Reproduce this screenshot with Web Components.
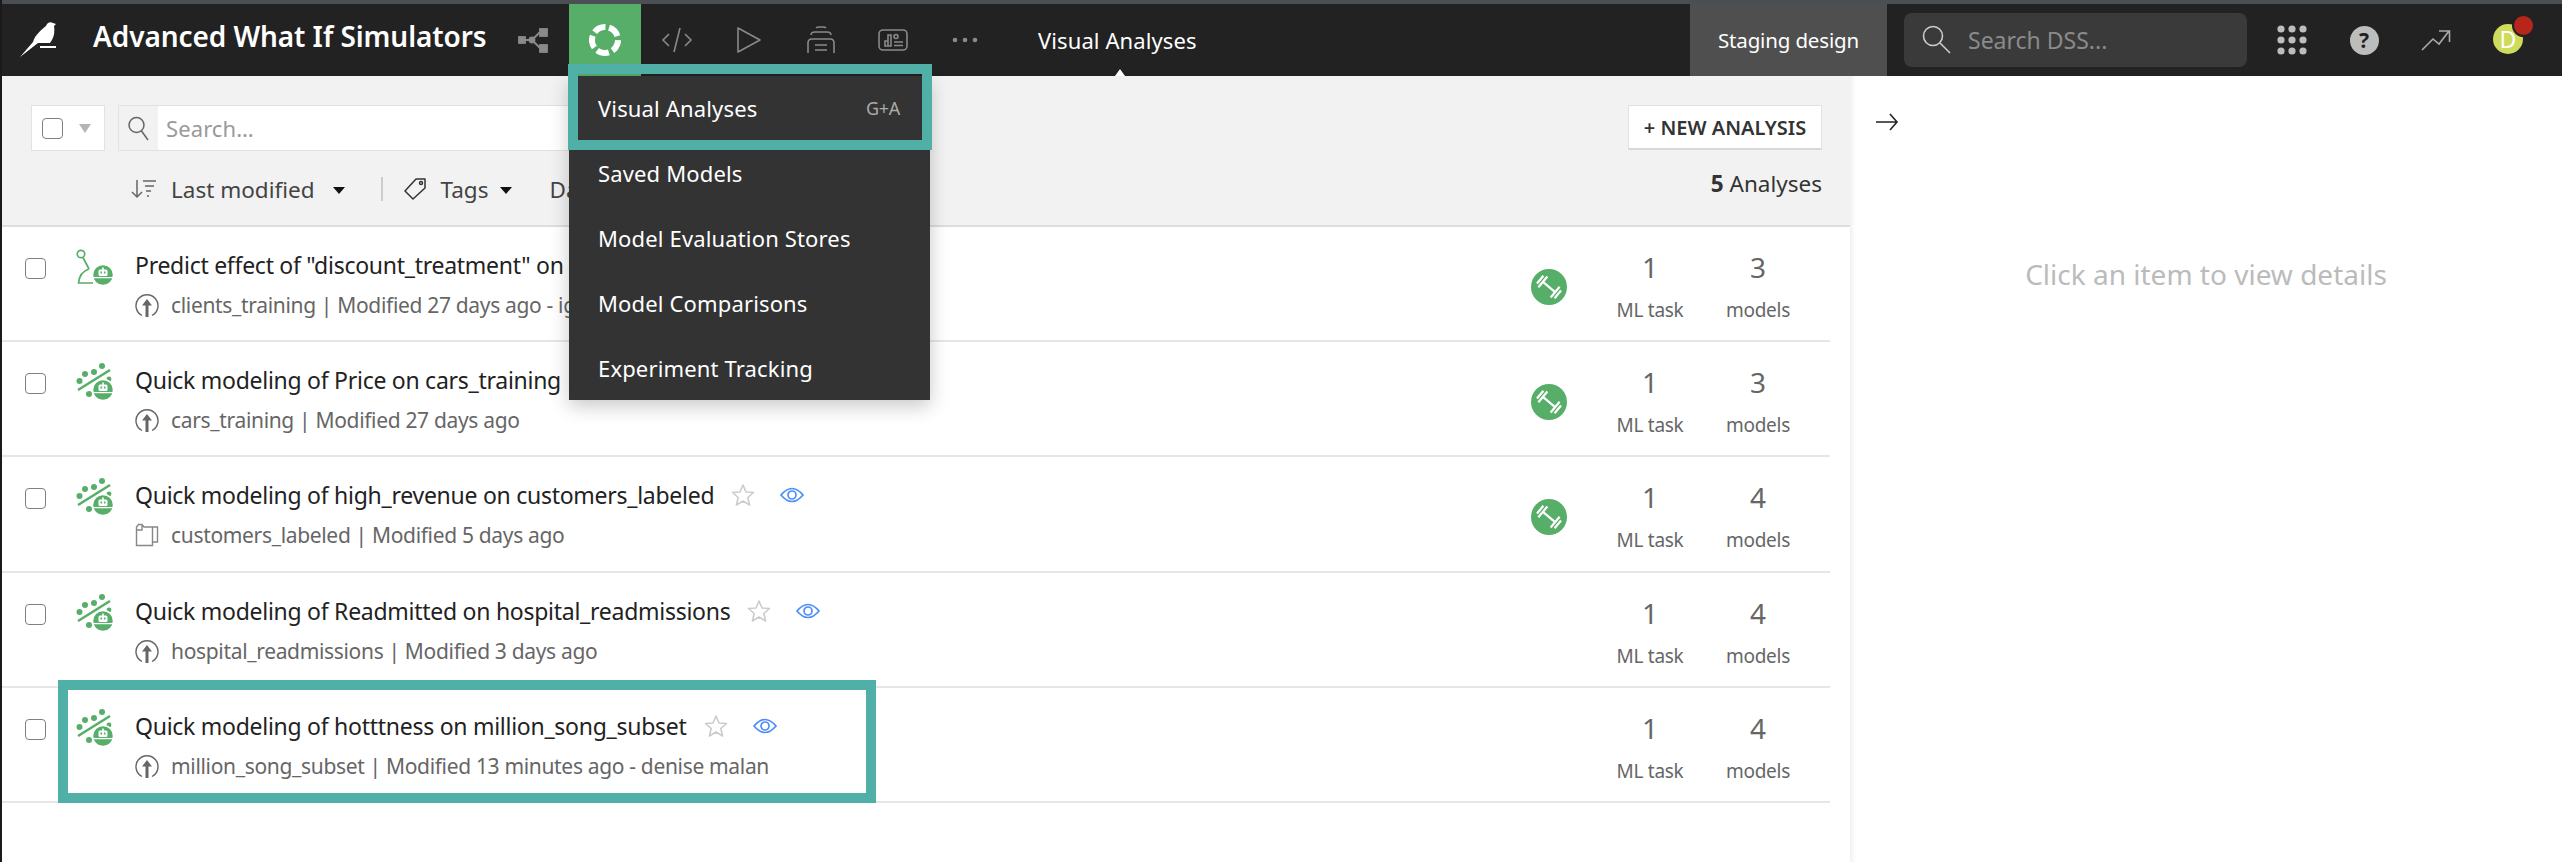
<!DOCTYPE html>
<html lang="en">
<head>
<meta charset="utf-8">
<title>Visual Analyses</title>
<style>
  html, body { margin: 0; padding: 0; background: #fff; }
  body { font-family: "Noto Sans", "Liberation Sans", sans-serif; }
</style>
</head>
<body>
<app-shell>
  <top-nav slot="nav" project="Advanced What If Simulators" section="Visual Analyses"></top-nav>
  <analyses-pane slot="pane">
    <analysis-row kind="uplift" source="upload" trained tasks="1" models="3" nowatch>
      <span slot="title">Predict effect of "discount_treatment" on</span>
      <span slot="meta">clients_training | Modified 27 days ago - ig</span>
    </analysis-row>
    <analysis-row kind="quick" source="upload" trained tasks="1" models="3" nowatch>
      <span slot="title">Quick modeling of Price on cars_training</span>
      <span slot="meta">cars_training | Modified 27 days ago</span>
    </analysis-row>
    <analysis-row kind="quick" source="folder" trained tasks="1" models="4">
      <span slot="title">Quick modeling of high_revenue on customers_labeled</span>
      <span slot="meta">customers_labeled | Modified 5 days ago</span>
    </analysis-row>
    <analysis-row kind="quick" source="upload" tasks="1" models="4">
      <span slot="title">Quick modeling of Readmitted on hospital_readmissions</span>
      <span slot="meta">hospital_readmissions | Modified 3 days ago</span>
    </analysis-row>
    <analysis-row kind="quick" source="upload" tasks="1" models="4">
      <span slot="title">Quick modeling of hotttness on million_song_subset</span>
      <span slot="meta">million_song_subset | Modified 13 minutes ago - denise malan</span>
    </analysis-row>
  </analyses-pane>
  <detail-panel slot="panel"></detail-panel>
  <nav-menu slot="overlay">
    <menu-item shortcut="G+A">Visual Analyses</menu-item>
    <menu-item>Saved Models</menu-item>
    <menu-item>Model Evaluation Stores</menu-item>
    <menu-item>Model Comparisons</menu-item>
    <menu-item>Experiment Tracking</menu-item>
  </nav-menu>
  <callout-box slot="overlay" style="left:568px;top:64px;width:364px;height:86px"></callout-box>
  <callout-box slot="overlay" style="left:58px;top:680px;width:818px;height:123px"></callout-box>
</app-shell>

<script>
// Small helper so every element below stamps its own template in an open shadow root
function stamp(el, html) {
  const tpl = document.createElement('template');
  tpl.innerHTML = html;
  el.attachShadow({ mode: 'open' }).appendChild(tpl.content.cloneNode(true));
}

class AppShell extends HTMLElement {
  constructor() {
    super();
    stamp(this, `
      <style>
        :host { display: block; position: relative; width: 2562px; height: 862px; overflow: hidden;
                box-sizing: border-box; border-left: 2px solid #1a1a1a; background: #fff; color: #222; }
        .strip { height: 4px; background: #4b4e53; }
        .main { display: flex; height: 786px; }
      </style>
      <div class="strip"></div>
      <slot name="nav"></slot>
      <div class="main">
        <slot name="pane"></slot>
        <slot name="panel"></slot>
      </div>
      <slot name="overlay"></slot>
    `);
  }
}

class TopNav extends HTMLElement {
  constructor() {
    super();
    stamp(this, `
      <style>
        :host { display: flex; align-items: stretch; height: 72px; background: #222; color: #fff; position: relative; }
        svg { display: block; }
        .logo { width: 40px; margin-left: 16px; display: flex; align-items: center; }
        .project { width: 404px; flex: none; margin-left: 35px; font-size: 28px; font-weight: 600; letter-spacing: -.08px;
                   line-height: 72px; margin-top: -4px; white-space: nowrap; }
        .tab { width: 72px; flex: none; display: flex; align-items: center; justify-content: center; }
        .tab.on { background: #57ae68; }
        .section { margin-left: 37px; line-height: 72px; font-size: 22px; letter-spacing: .1px; position: relative; white-space: nowrap; }
        .section::after { content: ""; position: absolute; left: 77px; bottom: 0; border: 5px solid transparent;
                          border-top: 0; border-bottom: 7px solid #fff; }
        .grow { flex: 1; }
        .env { width: 197px; flex: none; background: #4f4f4f; font-size: 20.5px; letter-spacing: -.15px; text-align: center; line-height: 72px; }
        .search { width: 343px; flex: none; box-sizing: border-box; margin: 9px 9px 9px 17px; background: #3a3a3a; border-radius: 8px;
                  display: flex; align-items: center; gap: 16px; padding-left: 18px; color: #8a8a8a; font-size: 23px; }
        .help { width: 29px; height: 29px; border-radius: 50%; background: #bdbdbd; color: #222; font-weight: 700; font-size: 21px;
                text-align: center; line-height: 29px; }
        .avatar { width: 30px; height: 30px; border-radius: 50%; background: #cfdb5b; color: #fff; font-size: 23px; line-height: 30px;
                  text-align: center; position: relative; margin-top: -2px; }
        .badge { position: absolute; left: 19px; top: -10px; width: 19px; height: 19px; border-radius: 50%; background: #b7261a;
                 border: 2px solid #222; }
      </style>
      <div class="logo">
        <svg width="40" height="40" viewBox="0 0 40 40" fill="#fff">
          <path d="M2 37 L15 22 C17 15 23 10 28 6 C29 3 32 1 35 3 L38 4 L36 6 C37 12 36 18 32 23 L20 23 Z"/>
          <rect x="22" y="26" width="16" height="2"/>
        </svg>
      </div>
      <div class="project"></div>
      <div class="tab">
        <svg width="32" height="32" viewBox="0 0 32 32" fill="#8a8a8a" stroke="#8a8a8a" stroke-width="1.8">
          <rect x="2" y="13" width="6" height="6"/><rect x="23" y="5" width="7" height="7"/><rect x="23" y="21" width="7" height="7"/>
          <circle cx="15" cy="16" r="2.5"/><path d="M8 16H15L23 8M15 16L23 24" fill="none"/>
        </svg>
      </div>
      <div class="tab on">
        <svg width="36" height="36" viewBox="0 0 36 36" fill="none" stroke="#fff" stroke-width="6">
          <circle cx="18" cy="18" r="13" stroke-dasharray="12.3 4" transform="rotate(-72 18 18)"/>
        </svg>
      </div>
      <div class="tab">
        <svg width="32" height="32" viewBox="0 0 32 32" fill="none" stroke="#8a8a8a" stroke-width="1.6">
          <path d="M8 10L2 16L8 22M24 10L30 16L24 22M19 4L13 28"/>
        </svg>
      </div>
      <div class="tab">
        <svg width="32" height="32" viewBox="0 0 32 32" fill="none" stroke="#8a8a8a" stroke-width="1.6" stroke-linejoin="round">
          <path d="M5 4V28L27 16Z"/>
        </svg>
      </div>
      <div class="tab">
        <svg width="32" height="32" viewBox="0 0 32 32" fill="none" stroke="#8a8a8a" stroke-width="1.6">
          <path d="M3 29V19Q3 15 7 15H25Q29 15 29 19V29M10 21H22M10 26H22M6 11Q6 8 10 8H22Q26 8 26 11M11 4Q12 3 14 3H18Q20 3 21 4"/>
        </svg>
      </div>
      <div class="tab">
        <svg width="32" height="32" viewBox="0 0 32 32" fill="none" stroke="#8a8a8a" stroke-width="1.6">
          <rect x="2" y="6" width="28" height="20" rx="4"/>
          <path d="M8 22V17H11V22ZM11 22V11H14V22H8M17 12.5a2 2 0 1 0 4 0a2 2 0 1 0 -4 0M17 18H26M17 21.5H26"/>
        </svg>
      </div>
      <div class="tab">
        <svg width="32" height="32" viewBox="0 0 32 32" fill="#8a8a8a"><circle cx="6" cy="16" r="2.3"/><circle cx="16" cy="16" r="2.3"/><circle cx="26" cy="16" r="2.3"/></svg>
      </div>
      <div class="section"></div>
      <div class="grow"></div>
      <div class="env">Staging design</div>
      <div class="search">
        <svg width="30" height="30" viewBox="0 0 30 30" fill="none" stroke="#ccc" stroke-width="1.6"><circle cx="11" cy="11" r="9.5"/><path d="M18 18L28 28"/></svg>
        <span>Search DSS...</span>
      </div>
      <div class="tab">
        <svg width="32" height="32" viewBox="0 0 32 32" fill="#bdbdbd">
          <circle cx="5" cy="5" r="3.6"/><circle cx="16" cy="5" r="3.6"/><circle cx="27" cy="5" r="3.6"/>
          <circle cx="5" cy="16" r="3.6"/><circle cx="16" cy="16" r="3.6"/><circle cx="27" cy="16" r="3.6"/>
          <circle cx="5" cy="27" r="3.6"/><circle cx="16" cy="27" r="3.6"/><circle cx="27" cy="27" r="3.6"/>
        </svg>
      </div>
      <div class="tab"><div class="help">?</div></div>
      <div class="tab">
        <svg width="32" height="32" viewBox="0 0 32 32" fill="none" stroke="#aaa" stroke-width="1.6"><path d="M2 26L13 15L19 20L29 7M19 7H29.5V18"/></svg>
      </div>
      <div class="tab" style="margin-right:18px"><div class="avatar">D<span class="badge"></span></div></div>
    `);
    this.shadowRoot.querySelector('.project').textContent = this.getAttribute('project');
    this.shadowRoot.querySelector('.section').textContent = this.getAttribute('section');
  }
}

class NavMenu extends HTMLElement {
  constructor() {
    super();
    stamp(this, `
      <style>
        :host { display: block; position: absolute; left: 567px; top: 76px; width: 361px; height: 324px; z-index: 2;
                background: #333; box-shadow: 0 6px 18px rgba(0,0,0,.22); }
      </style>
      <slot></slot>
    `);
  }
}

class MenuItem extends HTMLElement {
  constructor() {
    super();
    stamp(this, `
      <style>
        :host { display: flex; align-items: center; justify-content: space-between; height: 65px; padding: 0 30px 0 29px;
                color: #fff; font-size: 22px; letter-spacing: .15px; }
        .key { color: #aaa; font-size: 18px; letter-spacing: -.3px; }
        :host(:first-child) { height: 64px; }
      </style>
      <span><slot></slot></span><span class="key"></span>
    `);
    this.shadowRoot.querySelector('.key').textContent = this.getAttribute('shortcut') || '';
  }
}

class CalloutBox extends HTMLElement {
  constructor() {
    super();
    stamp(this, `<style>:host { display: block; position: absolute; z-index: 2; box-sizing: border-box; margin-left: -2px; border: 10px solid #50b0a8; pointer-events: none; }</style>`);
  }
}

class AnalysesPane extends HTMLElement {
  constructor() {
    super();
    stamp(this, `
      <style>
        :host { display: block; width: 1848px; flex: none; color: #333; }
        .head { height: 151px; box-sizing: border-box; background: #f2f2f2; border-bottom: 2px solid #dedede; padding: 29px 28px 0 29px;
                display: grid; grid-template-columns: 1fr auto; align-content: start; row-gap: 15px; }
        .line { display: flex; align-items: center; }
        .box { background: #fff; border: 1px solid #e2e2e2; box-sizing: border-box; height: 46px; display: flex; align-items: center; }
        .pick { width: 74px; padding-left: 10px; gap: 16px; }
        .check { width: 21px; height: 21px; box-sizing: border-box; border: 1.5px solid #808080; border-radius: 4px; background: #fff; }
        .tri { border: 6px solid transparent; border-top: 9px solid #b5b5b5; border-bottom: 0; }
        .find { width: 480px; margin-left: 13px; color: #999; font-size: 22px; letter-spacing: .1px; }
        .find i { width: 39px; height: 44px; background: #f2f2f2; display: flex; align-items: center; justify-content: center; margin-right: 8px; }
        .new { width: 194px; height: 45px; justify-content: center; font-size: 20px; font-weight: 600; color: #333;
               border-bottom: 2px solid #d8d8d8; }
        .filters { padding-left: 100px; font-size: 22.5px; height: 38px; margin-top: 4px; color: #444; white-space: nowrap; }
        .caret { border: 6.5px solid transparent; border-top: 7px solid #111; border-bottom: 0; margin-top: 2px; }
        .rule { width: 2px; height: 24px; background: #ccc; margin: 0 20px 0 36px; }
        .count { font-size: 22.5px; text-align: right; line-height: 28px; margin-top: 4px; }
        .count b { font-weight: 700; }
        .list { padding-right: 20px; }
      </style>
      <div class="head">
        <div class="line">
          <div class="box pick"><span class="check"></span><span class="tri"></span></div>
          <div class="box find">
            <i><svg width="24" height="26" viewBox="0 0 24 26" fill="none" stroke="#666" stroke-width="1.5"><circle cx="9.5" cy="10" r="7.5"/><path d="M14.5 16L21 25"/></svg></i>
            <span>Search…</span>
          </div>
        </div>
        <div class="box new">+ NEW ANALYSIS</div>
        <div class="line filters">
          <svg width="26" height="22" viewBox="0 0 26 22" fill="none" stroke="#666" stroke-width="1.5" style="margin-right:14px">
            <path d="M6 2V19M1 14L6 19L11 14M12 3H25M14 8H23M15 13H20M16 18H18"/>
          </svg>
          <span>Last modified</span>
          <span class="caret" style="margin-left:18px"></span>
          <span class="rule"></span>
          <svg width="24" height="24" viewBox="0 0 24 24" fill="none" stroke="#333" stroke-width="1.5" style="margin-right:14px">
            <path d="M13 2H22V11L10 22L2 14Z" stroke-linejoin="round"/><circle cx="18" cy="6" r="1.5"/>
          </svg>
          <span>Tags</span>
          <span class="caret" style="margin-left:12px;margin-right:37px"></span>
          <span>Date</span>
        </div>
        <div class="count"><b>5</b> Analyses</div>
      </div>
      <div class="list"><slot></slot></div>
    `);
  }
}

class AnalysisRow extends HTMLElement {
  static icons = {
    quick: `<path d="M2 28L34 8" stroke="#57ae68" stroke-width="2.6"/>
      <g fill="#57ae68"><circle cx="3.5" cy="19" r="3"/><circle cx="9" cy="12" r="3"/><circle cx="18" cy="10" r="3"/><circle cx="26" cy="4" r="3"/><circle cx="13" cy="32" r="3"/><circle cx="33" cy="17" r="2.4"/></g>`,
    uplift: `<g fill="none" stroke="#57ae68" stroke-width="1.7"><circle cx="5" cy="7" r="3.7"/><path d="M7 10.5L13 22M13 22Q3.5 25 2.5 36H17"/></g>`
  };

  constructor() {
    super();
    const source = this.getAttribute('source') === 'folder'
      ? `<path d="M1.5 7V22.5H17.5V4H9L7 1.5H3.5L1.5 4V7M17.5 4H22.5V19H17.5M7 1.5V7H1.5" fill="none" stroke="#888" stroke-width="1.4"/>`
      : `<path d="M7 22.5A11 11 0 1 1 17 22.5" fill="none" stroke="#666" stroke-width="1.4"/><path d="M12 6L7 12.5H10.5V24H13.5V12.5H17Z" fill="#666"/>`;
    stamp(this, `
      <style>
        :host { display: flex; height: 115.2px; box-sizing: border-box; border-bottom: 2px solid #e6e6e6; position: relative;
                padding: 0 18px 0 23px; background: #fff; color: #222; }
        svg { display: block; flex: none; }
        .check { width: 21px; height: 21px; box-sizing: border-box; border: 1.5px solid #808080; border-radius: 4px; margin-top: 31px; flex: none; }
        .kind { margin: 20px 21px 0 30px; }
        .body { flex: 1; min-width: 0; padding-top: 22px; }
        .title { display: flex; align-items: center; height: 32px; font-size: 23px; letter-spacing: -.27px; white-space: nowrap; }
        .star { margin-left: 17px; }
        .eye { margin-left: 25px; }
        .meta { display: flex; align-items: center; gap: 12px; height: 32px; margin-top: 8px; font-size: 21px; letter-spacing: -.33px; color: #666; white-space: nowrap; }
        .state { width: 36px; margin: 42px 29px 0 0; flex: none; }
        .stat { width: 108px; flex: none; text-align: center; color: #666; padding-top: 20px; }
        .num { font-size: 28px; line-height: 40px; }
        .lab { font-size: 19px; letter-spacing: -.3px; line-height: 28px; margin-top: 9px; }
      </style>
      <span class="check"></span>
      <svg class="kind" width="38" height="38" viewBox="0 0 38 38">
        ${AnalysisRow.icons[this.getAttribute('kind')]}
        <circle cx="27" cy="28" r="10.5" fill="#57ae68" stroke="#fff" stroke-width="1.5"/>
        <rect x="26.2" y="20.5" width="1.6" height="2.5" fill="#fff"/>
        <rect x="22.5" y="22.5" width="9" height="6.5" rx="1.5" fill="#fff"/>
        <rect x="24.5" y="24.5" width="1.6" height="2" fill="#57ae68"/><rect x="27.9" y="24.5" width="1.6" height="2" fill="#57ae68"/>
        <path d="M17 30.6H37" stroke="#fff" stroke-width="1.3"/>
      </svg>
      <div class="body">
        <div class="title">
          <slot name="title"></slot>
          ${this.hasAttribute('nowatch') ? '' : `
          <svg class="star" width="24" height="24" viewBox="0 0 24 24" fill="none" stroke="#ccc" stroke-width="1.6" stroke-linejoin="round">
            <path d="M12 2L15 9L22.5 9.5L16.8 14.5L18.6 22L12 18L5.4 22L7.2 14.5L1.5 9.5L9 9Z"/>
          </svg>
          <svg class="eye" width="24" height="20" viewBox="0 0 24 20" fill="none" stroke="#4d8ef7" stroke-width="1.7">
            <path d="M1 10Q12 -3 23 10Q12 23 1 10Z"/><circle cx="12" cy="10" r="4"/>
          </svg>`}
        </div>
        <div class="meta">
          <svg width="24" height="24" viewBox="0 0 24 24">${source}</svg>
          <slot name="meta"></slot>
        </div>
      </div>
      ${this.hasAttribute('trained') ? `
      <svg class="state" width="36" height="36" viewBox="0 0 36 36">
        <circle cx="18" cy="18" r="18" fill="#57ae68"/>
        <g transform="rotate(40 18 18)" stroke="#fff" fill="none" stroke-width="2.2">
          <path d="M10 18H26"/><path d="M6.5 13V23M10 11V25M26 11V25M29.5 13V23"/>
        </g>
      </svg>` : '<span class="state"></span>'}
      <div class="stat"><div class="num">${this.getAttribute('tasks')}</div><div class="lab">ML task</div></div>
      <div class="stat"><div class="num">${this.getAttribute('models')}</div><div class="lab">models</div></div>
    `);
  }
}

class DetailPanel extends HTMLElement {
  constructor() {
    super();
    stamp(this, `
      <style>
        :host { display: block; flex: 1; position: relative; background: #fff; box-shadow: inset 5px 0 5px -3px rgba(0,0,0,.07); }
        .arrow { padding: 36px 0 0 25px; height: 28px; }
        .hint { text-align: center; color: #bbb; font-size: 28px; margin-top: 114px; line-height: 40px; }
      </style>
      <div class="arrow">
        <svg width="24" height="20" viewBox="0 0 24 20" fill="none" stroke="#222" stroke-width="1.6"><path d="M1 10H22M15 2L22 10L15 18"/></svg>
      </div>
      <div class="hint">Click an item to view details</div>
    `);
  }
}

customElements.define('app-shell', AppShell);
customElements.define('top-nav', TopNav);
customElements.define('nav-menu', NavMenu);
customElements.define('menu-item', MenuItem);
customElements.define('callout-box', CalloutBox);
customElements.define('analyses-pane', AnalysesPane);
customElements.define('analysis-row', AnalysisRow);
customElements.define('detail-panel', DetailPanel);
</script>
</body>
</html>
